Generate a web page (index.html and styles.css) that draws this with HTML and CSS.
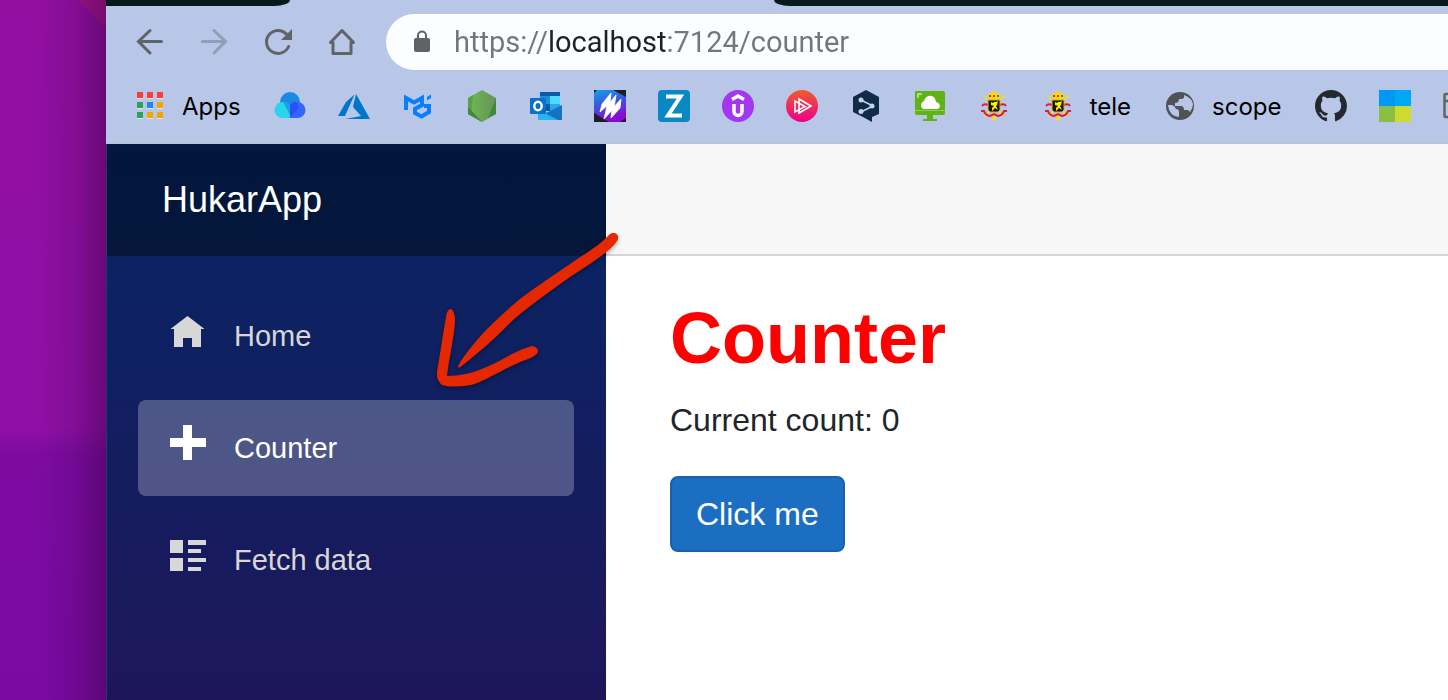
FILE: index.html
```html
<!DOCTYPE html>
<html lang="en">
<head>
<meta charset="utf-8">
<meta name="viewport" content="width=device-width, initial-scale=1">
<title>Counter</title>
<link rel="stylesheet" href="styles.css">
</head>
<body>
<div class="desktop">
  <div class="wallpaper"></div>
  <div class="window">
    <div class="tabs"><div class="tab-before"></div><div class="tab-active"></div><div class="tab-after"></div></div>
    <div class="toolbar">
      <div class="controls">
        <button class="control" type="button" aria-label="Back"><svg viewBox="0 0 32 32"><path d="M27.500 15.500H5M16 4.500L4.500 15.500 16 27" fill="none" stroke="currentColor" stroke-width="3" stroke-linecap="round"/></svg></button>
        <button class="control control-off" type="button" aria-label="Forward"><svg viewBox="0 0 32 32"><path d="M4.500 15.500H27M16 4.500l11.500 11L16 27" fill="none" stroke="currentColor" stroke-width="3" stroke-linecap="round"/></svg></button>
        <button class="control" type="button" aria-label="Reload"><svg viewBox="0 0 32 32"><path d="M26.600 20.500A11.500 11.500 0 1 1 24.300 7.900" fill="none" stroke="currentColor" stroke-width="3" stroke-linecap="round"/><path d="M30 3v11H19z" fill="currentColor"/></svg></button>
        <button class="control" type="button" aria-label="Home"><svg viewBox="0 0 32 32"><path d="M4.500 16.500L16 4.500l11.500 12H25v11H7v-11z" fill="none" stroke="currentColor" stroke-width="3" stroke-linejoin="round"/></svg></button>
      </div>
      <div class="omnibox">
        <svg class="lock" viewBox="0 0 18 24"><rect x="1" y="8" width="16" height="14" rx="2" fill="#5f6368"/><path d="M5 9V5.500a4 4 0 0 1 8 0V9" fill="none" stroke="#5f6368" stroke-width="2"/></svg>
        <input class="url" type="text" aria-label="Address" value="https://localhost:7124/counter" spellcheck="false">
      </div>
    </div>
    <nav class="bookmarks" aria-label="Bookmarks">
      <a class="bookmark bookmark-named" href="#apps"><svg viewBox="0 0 32 32"><g fill="#e4e8f2"><path d="M3 4h6v5H3zM13 4h6v5h-6zM23 4h6v5h-6zM3 14h6v5H3zM13 14h6v5h-6zM23 14h6v5h-6zM3 24h6v5H3zM13 24h6v5h-6zM23 24h6v5h-6z"/></g><path d="M3 2h6v6H3zM13 2h6v6h-6zM23 2h6v6h-6z" fill="#fa3e34"/><path d="M3 12h6v6H3zM3 22h6v6H3z" fill="#30a05b"/><path d="M13 12h6v6h-6z" fill="#1d88f5"/><path d="M23 12h6v6h-6zM13 22h6v6h-6zM23 22h6v6h-6z" fill="#f5a400"/></svg>Apps</a>
      <a class="bookmark" href="#cloud" aria-label="Cloud"><svg viewBox="0 0 32 32"><circle cx="16" cy="12" r="10" fill="#1b8ae5"/><path d="M9 12c4 0 7 5 7 8v8H8a8 8 0 0 1 1-16z" fill="#2bd4ed"/><path d="M23 12c-4 0-7 5-7 8v8h8a8 8 0 0 0-1-16z" fill="#3267ff"/><path d="M9 12q4-1 7 3v10z" fill="#15a8dc"/><path d="M23 12q-4-1-7 3v12l8-8z" fill="#304cff"/></svg></a>
      <a class="bookmark" href="#azure" aria-label="Azure"><svg viewBox="0 0 32 32"><path d="M16.500 4.500L8 12 0 26h7zM18 4l14 25H7.500L23 26l-8-9z" fill="#0075cc"/></svg></a>
      <a class="bookmark" href="#mui" aria-label="MUI"><svg viewBox="0 0 32 32" fill="none" stroke="#087fff" stroke-width="4"><path d="M4 20V8l8 4.500L20 8v7l-7 4v4l6.500 3.500L27 22v-6h-5"/><path d="M25 7l4-2.500V8l-4 2.500z" fill="#087fff" stroke="none"/></svg></a>
      <a class="bookmark" href="#node" aria-label="Node.js"><svg viewBox="0 0 32 32"><defs><linearGradient id="leaf"><stop stop-color="#6fbb4d"/><stop offset="1" stop-color="#66925e"/></linearGradient></defs><path d="M16 0l14 8v16l-14 8-14-8V8z" fill="url(#leaf)"/><path d="M7 5L2 8v16l3 2z" fill="#5a9e50"/><path d="M2 17v7l14 8z" fill="#3f873c"/><path d="M30 8v16l-8 4z" fill="#44883f"/></svg></a>
      <a class="bookmark" href="#outlook" aria-label="Outlook"><svg viewBox="0 0 32 32"><path d="M10 2h20v18H10z" fill="#1490df"/><path d="M10 2h20v4H10z" fill="#0a5ba8"/><path d="M20 6h10v8H20z" fill="#50d9ff"/><path d="M10 14h10v7H10z" fill="#0358a7"/><path d="M20 14h10v7H20z" fill="#29a8ea"/><path d="M8 20l12 4 12-9v15H8z" fill="#35a8e8"/><path d="M16 23l16-8v15H19z" fill="#1473c7"/><path d="M9 20l19 10H9z" fill="#28b4ef"/><rect y="8" width="16" height="16" rx="1" fill="#0870c9"/><ellipse cx="8" cy="16" rx="3.700" ry="4.300" fill="none" stroke="#fff" stroke-width="2.400"/></svg></a>
      <a class="bookmark" href="#mw" aria-label="Stripes"><svg viewBox="0 0 32 32"><defs><linearGradient id="stripe" x2="0.300" y2="1"><stop stop-color="#159fed"/><stop offset=".5" stop-color="#3c55dc"/><stop offset="1" stop-color="#8b08cf"/></linearGradient></defs><path d="M0 0h32v32H0z" fill="#1f1d24"/><path d="M3 0h16l13 7v21l-6 4H15L0 23V3z" fill="url(#stripe)"/><path d="M17 3l-1 10L6 22l2-8zM22 5l-2 13-10 11 3-13zM27 9l-1 9-9 10 1-9z" fill="#fff" stroke="#fff" stroke-width=".8"/></svg></a>
      <a class="bookmark" href="#z" aria-label="Z"><svg viewBox="0 0 32 32"><rect width="32" height="32" rx="4" fill="#0989c4"/><path d="M8 6.500h14.500L10 25.500h14" fill="none" stroke="#fff" stroke-width="4"/></svg></a>
      <a class="bookmark" href="#udemy" aria-label="Udemy"><svg viewBox="0 0 32 32"><circle cx="16" cy="16" r="16" fill="#a435f0"/><path d="M10 9.500L16 6l6 3.500M12 14v7c0 6 8 6 8 0v-7" fill="none" stroke="#fff" stroke-width="3.500"/></svg></a>
      <a class="bookmark" href="#plural" aria-label="Pluralsight"><svg viewBox="0 0 32 32"><defs><linearGradient id="play" x2="0" y2="1"><stop stop-color="#f15b2a"/><stop offset="1" stop-color="#ec008c"/></linearGradient></defs><circle cx="16" cy="16" r="16" fill="url(#play)"/><path d="M9 11v11l10-5.500zM13 9v14l12-7z" fill="none" stroke="#fff" stroke-width="1.600"/></svg></a>
      <a class="bookmark" href="#deepl" aria-label="DeepL"><svg viewBox="0 0 32 32"><path d="M16 0l13 7v17l-7 3v5l-9-5-10-5V7z" fill="#0f2b46"/><path d="M11 10l12 6-12 6" fill="none" stroke="#c4d2ea" stroke-width="1.500"/><g fill="#c4d2ea"><circle cx="11" cy="10" r="2.500"/><circle cx="22" cy="16" r="2.500"/><circle cx="11" cy="21.500" r="2.500"/></g></svg></a>
      <a class="bookmark" href="#screen" aria-label="Cloud screen"><svg viewBox="0 0 32 32"><path d="M2 1h27q2 0 2 2v20q0 2-2 2H3q-2 0-2-2V3q0-2 1-2z" fill="#60b315"/><path d="M1 20.500h30" stroke="#8dd04a"/><path d="M13 25h6v4h4v2H9v-2h4z" fill="#60b315"/><path d="M9 19a4.500 4.500 0 0 1 1-8c2-7 11-7 12 1 5 1 5 7 1 7z" fill="#fff"/><path d="M4 8V4h4" fill="none" stroke="#c8e8a7" stroke-width="1.500"/></svg></a>
      <a class="bookmark" href="#crest" aria-label="Federal services"><svg viewBox="0 0 32 32"><g id="crest"><path d="M5 5l21 22M27 5L6 27M16 0v31" stroke="#f4e600" stroke-width="1.300"/><path d="M10 3l3 1 3-2 3 2 3-1-1 6H11z" fill="#ffdc00"/><path d="M11 6h10" stroke="#d84300" stroke-width="2" stroke-dasharray="2"/><path d="M10 15q-4-2-6 1M22 15q4-2 6 1M3 21h3q1 4 6 5l4-2 4 2q5-1 6-5h3" fill="none" stroke="#e5163e" stroke-width="2"/><path d="M10 10h12v10l-2 2h-8l-2-2z" fill="#171410" stroke="#d8b600"/><path d="M13 12l2 1 1-1h2l2-1-1 4-1 1 2 4-3-2-3 3v-3l2-2-3-1z" fill="#fff000"/><circle cx="16" cy="28" r="2" fill="#ffe000"/></g></svg></a>
      <a class="bookmark bookmark-named" href="#tele"><svg viewBox="0 0 32 32"><use href="#crest"/></svg>tele</a>
      <a class="bookmark bookmark-named" href="#scope"><svg viewBox="0 0 32 32"><circle cx="16" cy="16" r="14" fill="#505356"/><path d="M20 5q1 4-3 4h-2q0 4-4 4v3h6q3 0 3 4h4l2 2q3-4 3-8Q28 8 20 5zM4 15h4q3 1 4 4 3 0 3 3v5Q5 26 4 15z" fill="#b8c6e8"/></svg>scope</a>
      <a class="bookmark" href="#github" aria-label="GitHub"><svg viewBox="0 0 16 16"><path d="M8 0C3.580 0 0 3.580 0 8c0 3.540 2.290 6.530 5.470 7.590.4.070.55-.17.55-.38 0-.19-.01-.82-.01-1.490-2.010.37-2.530-.49-2.690-.94-.09-.23-.48-.94-.82-1.130-.28-.15-.68-.52-.01-.53.63-.01 1.080.58 1.230.82.72 1.210 1.870.87 2.330.66.07-.52.28-.87.51-1.070-1.780-.2-3.640-.89-3.640-3.950 0-.87.31-1.590.82-2.150-.08-.2-.36-1.020.08-2.120 0 0 .67-.21 2.200.82A7.420 7.420 0 0 1 8 3.860c.68 0 1.360.09 2 .27 1.530-1.040 2.200-.82 2.200-.82.44 1.100.16 1.920.08 2.120.51.56.82 1.270.82 2.150 0 3.070-1.870 3.750-3.650 3.950.29.25.54.73.54 1.480 0 1.070-.01 1.930-.01 2.200 0 .21.15.46.55.38A8.010 8.010 0 0 0 16 8c0-4.420-3.580-8-8-8z" fill="#23292f"/></svg></a>
      <a class="bookmark" href="#tiles" aria-label="Tiles"><svg viewBox="0 0 32 32"><path d="M0 0h16v16H0z" fill="#0098f5"/><path d="M16 0h16v16H16z" fill="#00a8f4"/><path d="M0 16h16v16H0z" fill="#89c043"/><path d="M16 16h16v16H16z" fill="#cddb30"/></svg></a>
      <a class="bookmark" href="#page" aria-label="Page"><svg viewBox="0 0 32 32"><path d="M1.500 5q0-1 1-1H29v23H3q-1.500 0-1.500-1zM1 11h28M10 11v16" fill="none" stroke="#606368" stroke-width="2.500"/></svg></a>
    </nav>
    <div class="page">
      <aside class="sidebar">
        <div class="brand"><a class="brand-link" href="#top">HukarApp</a></div>
        <nav class="menu" aria-label="Main">
          <a class="menu-item" href="#home"><svg viewBox="0 0 36 36"><path d="M17.500 3L.5 16H4v18h9v-9h9v9h9V16h3.500z" fill="currentColor"/></svg>Home</a>
          <a class="menu-item menu-current" href="#counter" aria-current="page"><svg viewBox="0 0 36 36"><path d="M13 0h9v13h14v9H22v13h-9V22H0v-9h13z" fill="currentColor"/></svg>Counter</a>
          <a class="menu-item" href="#fetch"><svg viewBox="0 0 36 36"><path d="M0 3h13v13H0zM18 3h18v5H18zM18 12h13v4H18zM0 21h13v13H0zM18 21h18v4H18zM18 30h13v4H18z" fill="currentColor"/></svg>Fetch data</a>
        </nav>
      </aside>
      <main class="main">
        <div class="main-top"></div>
        <article class="content">
          <h1 class="title">Counter</h1>
          <p class="count">Current count: 0</p>
          <button class="primary" type="button">Click me</button>
        </article>
      </main>
    </div>
    <svg class="arrow" viewBox="0 0 220 180" aria-hidden="true"><path d="M38 146C44 135 55 122 67 109C78 98 89 88 100 79C117 66 134 55 150 44C166 33 180 25 189 15C194 10 201 15 197 21C190 32 168 45 150 57C133 69 116 81 100 94C88 104 78 116 67 125Q47 142 39 148Z" fill="#e52800"/><path d="M26 97Q27 89 31 89Q35 91 35 101C34 119 29 138 27 156C53 156 74 144 92 134Q104 128 112 126Q118 127 118 132Q116 136 108 139C89 145 67 161 51 165Q32 168 22 165Q16 160 17 152C20 134 23 114 26 97Z" fill="#e52800"/></svg>
  </div>
</div>
</body>
</html>
```
FILE: styles.css
```css
* { box-sizing: border-box; }
body { margin: 0; font-family: "Liberation Sans", Arial, sans-serif; }
a { color: inherit; text-decoration: none; }
button { font: inherit; cursor: pointer; }

.desktop { display: flex; min-height: 100vh; overflow: hidden; }
.wallpaper {
  flex: 0 0 106px;
  background:
    linear-gradient(90deg, transparent 35%, rgba(50, 0, 60, 0.15) 70%, rgba(50, 0, 60, 0.42)),
    linear-gradient(225deg, #a8128f 0, #a8128f 19px, transparent 20px),
    linear-gradient(180deg, #920fa2 0, #9010a6 61%, #7d0ba2 65%, #7b0aa3 100%);
}
.window {
  position: relative;
  flex: 1;
  min-width: 0;
  display: flex;
  flex-direction: column;
  background: #b8c6e8;
}

.tabs { display: flex; height: 6px; }
.tab-before { flex: 0 0 184px; background: #071a1a; border-bottom-right-radius: 16px 6px; }
.tab-active { flex: 0 0 484px; }
.tab-after { flex: 1; background: #071a1a; border-bottom-left-radius: 16px 6px; }

.toolbar { display: flex; align-items: center; gap: 28px; padding: 8px 0 8px 28px; }
.controls { display: flex; gap: 32px; }
.control { width: 32px; height: 32px; padding: 0; border: 0; background: none; color: #606368; }
.control svg { display: block; width: 32px; height: 32px; }
.control-off { color: #929db6; }
.omnibox {
  flex: 1;
  display: flex;
  align-items: center;
  gap: 23px;
  height: 56px;
  padding-left: 27px;
  border-radius: 28px 0 0 28px;
  background: #fcfdff;
}
.lock { flex: none; width: 18px; height: 24px; }
.url {
  flex: 1;
  min-width: 0;
  padding: 0;
  border: 0;
  outline: 0;
  font-family: Roboto, sans-serif;
  font-size: 29px;
  line-height: 40px;
  color: transparent;
  background: linear-gradient(90deg, #747678 94px, #202124 94px, #202124 212px, #747678 212px);
  background-clip: text;
  -webkit-background-clip: text;
}

.bookmarks {
  display: flex;
  gap: 32px;
  padding: 12px 0 20px 28px;
  border-bottom: 2px solid #b5c3d8;
  overflow: hidden;
}
.bookmark {
  flex: none;
  display: flex;
  align-items: center;
  gap: 16px;
  height: 32px;
  font-family: Inter, sans-serif;
  font-size: 24px;
  color: #000;
}
.bookmark-named { padding-right: 1px; }
.bookmark svg { flex: none; width: 32px; height: 32px; }

.page { flex: 1; display: flex; background: #fff; }
.sidebar {
  flex: 0 0 500px;
  border-left: 1px solid #26396d;
  background: linear-gradient(180deg, #052767 0, #0b2363 20%, #1d175a 100%);
}
.brand {
  display: flex;
  align-items: center;
  height: 112px;
  padding-left: 55px;
  background: linear-gradient(180deg, #02163e, #04163a);
  color: #fff;
  font-size: 36px;
}
.menu { display: flex; flex-direction: column; gap: 16px; padding: 32px 32px 32px 31px; }
.menu-item {
  display: flex;
  align-items: center;
  gap: 28px;
  height: 96px;
  padding-left: 32px;
  border-radius: 8px;
  color: #d7d7d7;
  font-size: 29px;
}
.menu-item svg { width: 36px; height: 36px; margin-bottom: 10px; }
.menu-current { background: rgba(255, 255, 255, 0.25); color: #fff; }

.main { flex: 1; min-width: 0; }
.main-top { height: 112px; border-bottom: 2px solid #d6d5d5; background: #f7f7f7; }
.content { padding: 40px 64px; color: #212529; font-size: 32px; line-height: 48px; }
.title { margin: 0 0 16px; color: #f00; font-size: 72px; line-height: 84px; font-weight: 700; }
.count { margin: 0 0 32px; }
.primary {
  min-height: 76px;
  padding: 12px 24px;
  border: 2px solid #1861ac;
  border-radius: 8px;
  background: #1b6ec2;
  color: #fff;
}

.arrow {
  position: absolute;
  left: 314px;
  top: 220px;
  width: 220px;
  height: 180px;
  filter: drop-shadow(0 2px 2px rgba(0, 0, 0, 0.35));
  pointer-events: none;
}
```
